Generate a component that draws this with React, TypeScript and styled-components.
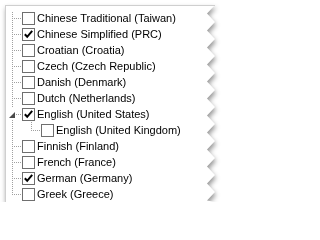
import React from "react";
import styled, { createGlobalStyle } from "styled-components";

const Global = createGlobalStyle`
  html, body { margin: 0; padding: 0; background: #ffffff; }
  body { font-family: "Liberation Sans", Arial, sans-serif; }
`;

const DOT = "#a0a0a0";

const vDots = `repeating-linear-gradient(to bottom, ${DOT} 0 1px, transparent 1px 2px)`;
const hDots = `repeating-linear-gradient(to right, ${DOT} 0 1px, transparent 1px 2px)`;

type Seg = { kind: "v" | "h"; x: number; y: number; len: number };

const segBackground = (segs: Seg[]) => {
  const img = segs.map((s) => (s.kind === "v" ? vDots : hDots)).join(", ");
  const size = segs.map((s) => (s.kind === "v" ? `1px ${s.len}px` : `${s.len}px 1px`)).join(", ");
  const pos = segs.map((s) => `${s.x}px ${s.y}px`).join(", ");
  return `background-image: ${img}; background-size: ${size}; background-position: ${pos}; background-repeat: no-repeat;`;
};

type Kind = "first" | "middle" | "last" | "expanded" | "child";

const SEGS: Record<Kind, Seg[]> = {
  first: [
    { kind: "v", x: 6, y: 2, len: 14 },
    { kind: "h", x: 8, y: 8, len: 8 },
  ],
  middle: [
    { kind: "v", x: 6, y: 0, len: 16 },
    { kind: "h", x: 8, y: 8, len: 8 },
  ],
  last: [
    { kind: "v", x: 6, y: 0, len: 10 },
    { kind: "h", x: 8, y: 8, len: 8 },
  ],
  expanded: [
    { kind: "v", x: 6, y: 0, len: 2 },
    { kind: "v", x: 6, y: 14, len: 2 },
    { kind: "h", x: 10, y: 8, len: 6 },
  ],
  child: [
    { kind: "v", x: 6, y: 0, len: 16 },
    { kind: "v", x: 25, y: 0, len: 9 },
    { kind: "h", x: 27, y: 8, len: 8 },
  ],
};

const Frame = styled.div`
  display: flex;
  width: 211px;
  margin: 5px 0 0 5px;
  filter: drop-shadow(1px 3px 2.5px rgba(0, 0, 0, 0.42));
`;

const Sheet = styled.div`
  flex: 0 0 201px;
  height: 197px;
  background: #ffffff;
  border-top: 1px solid #cfcfcf;
  border-left: 1px solid #cfcfcf;
  padding-top: 4px;
  box-sizing: border-box;
  overflow: hidden;
`;

const Edge = styled.svg`
  flex: 0 0 9px;
  display: block;
`;

const List = styled.ul`
  list-style: none;
  margin: 0;
  padding: 0;
  display: flex;
  flex-direction: column;
`;

const Row = styled.li`
  display: flex;
  align-items: center;
  height: 16px;
  white-space: nowrap;
`;

const Gutter = styled.div<{ $kind: Kind }>`
  flex: 0 0 ${(p) => (p.$kind === "child" ? 35 : 16)}px;
  align-self: stretch;
  display: flex;
  align-items: flex-start;
  padding: 6px 0 0 3px;
  box-sizing: border-box;
  ${(p) => segBackground(SEGS[p.$kind])}
`;

const Box = styled.span`
  flex: 0 0 13px;
  width: 13px;
  height: 13px;
  box-sizing: border-box;
  border: 1px solid #6f6f6f;
  background: #ffffff;
  display: flex;
  align-items: center;
  justify-content: center;
`;

const Label = styled.span`
  margin-left: 2px;
  font-size: 11px;
  line-height: 16px;
  color: #000000;
`;

type Item = { label: string; checked?: boolean; level?: number; expanded?: boolean };

const items: Item[] = [
  { label: "Chinese Traditional (Taiwan)" },
  { label: "Chinese Simplified (PRC)", checked: true },
  { label: "Croatian (Croatia)" },
  { label: "Czech (Czech Republic)" },
  { label: "Danish (Denmark)" },
  { label: "Dutch (Netherlands)" },
  { label: "English (United States)", checked: true, expanded: true },
  { label: "English (United Kingdom)", level: 1 },
  { label: "Finnish (Finland)" },
  { label: "French (France)" },
  { label: "German (Germany)", checked: true },
  { label: "Greek (Greece)" },
];

const Check = () => (
  <svg width="11" height="11" viewBox="0 0 11 11">
    <polyline points="1.8,5.2 4.2,7.8 9.2,1.8" fill="none" stroke="#000" strokeWidth="2" />
  </svg>
);

const Triangle = () => (
  <svg width="6" height="6" viewBox="0 0 6 6" style={{ display: "block" }}>
    <polygon points="6,0 6,6 0,6" fill="#4a4a4a" />
  </svg>
);

const EdgeShape = ({ h }: { h: number }) => {
  const pts: string[] = ["0,0", "9,0"];
  const period = 17;
  let y = 0;
  let left = true;
  while (y + period / 2 < h) {
    y += period / 2;
    pts.push(`${left ? 1 : 9},${y}`);
    left = !left;
  }
  pts.push(`${left ? 1 : 9},${h}`);
  pts.push(`0,${h}`);
  return (
    <Edge width="9" height={h} viewBox={`0 0 9 ${h}`}>
      <polygon points={pts.join(" ")} fill="#ffffff" />
      <line x1="0" y1="0.5" x2="9" y2="0.5" stroke="#cfcfcf" />
    </Edge>
  );
};

const kindOf = (it: Item, i: number, last: number): Kind => {
  if (it.level === 1) return "child";
  if (it.expanded) return "expanded";
  if (i === 0) return "first";
  if (i === last) return "last";
  return "middle";
};

export default function App() {
  const last = items.length - 1;
  return (
    <>
      <Global />
      <Frame>
        <Sheet>
          <List>
            {items.map((it, i) => {
              const kind = kindOf(it, i, last);
              return (
                <Row key={it.label}>
                  <Gutter $kind={kind}>{kind === "expanded" && <Triangle />}</Gutter>
                  <Box>{it.checked && <Check />}</Box>
                  <Label>{it.label}</Label>
                </Row>
              );
            })}
          </List>
        </Sheet>
        <EdgeShape h={197} />
      </Frame>
    </>
  );
}
